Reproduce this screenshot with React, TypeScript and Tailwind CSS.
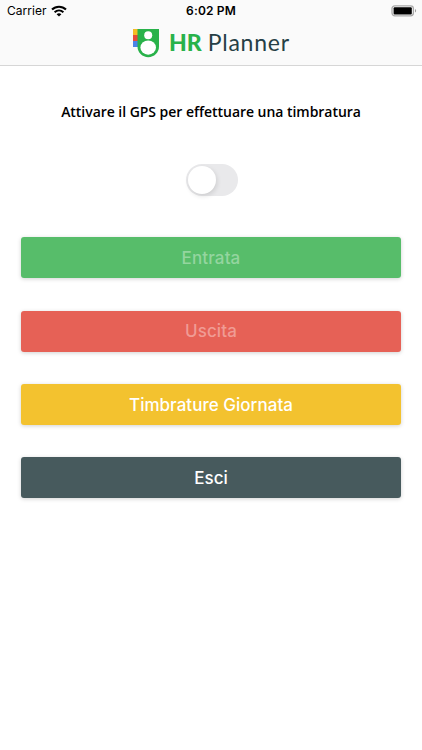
import clsx from "clsx";

const actions = [
  { label: "Entrata", color: "bg-[#57bd6a]", text: "text-[#94d59f]", spacing: "tracking-[0.12px]" },
  { label: "Uscita", color: "bg-[#e66156]", text: "text-[#f09b94]", spacing: "tracking-[0.1px]" },
  { label: "Timbrature Giornata", color: "bg-[#f3c22f]", text: "text-white", spacing: "tracking-[0.03px]" },
  { label: "Esci", color: "bg-[#475a5d]", text: "text-white", spacing: "tracking-normal" },
];

const WifiIcon = () => (
  <svg width="16" height="12" viewBox="0 0 16 12" fill="none">
    <path d="M1 4.6C5 .7 11 .7 15 4.6" stroke="black" strokeWidth="2.1" />
    <path d="M3.6 7.2c2.6-2.4 6.2-2.4 8.8 0" stroke="black" strokeWidth="2" />
    <path d="M5.6 9.2c1.4-1.3 3.4-1.3 4.8 0L8 11.6z" fill="black" />
  </svg>
);

const BatteryIcon = () => (
  <svg width="26" height="12" viewBox="0 0 26 12" fill="none">
    <rect x="1" y="0.8" width="21.4" height="10" rx="2.8" stroke="#a9a9a9" strokeWidth="1.3" />
    <rect x="2.6" y="2.2" width="18.2" height="7.2" rx="1" fill="black" />
    <path d="M24 4v3.6c1.5-.6 1.5-3 0-3.6z" fill="#9d9d9d" />
  </svg>
);

const LogoMark = () => (
  <svg width="26" height="29" viewBox="0 0 26 29">
    <path d="M0 0h6v6H0z" fill="#f5bd25" />
    <path d="M0 6h6v6H0z" fill="#e64b3c" />
    <path d="M0 12h6v6H0z" fill="#4b83e8" />
    <path d="M4.5 0H26v17.5a10.75 10.75 0 0 1-21.5 0z" fill="#29b24a" />
    <circle cx="15.2" cy="6.2" r="4" fill="white" />
    <ellipse cx="15.2" cy="18.6" rx="7.8" ry="7.1" fill="white" />
  </svg>
);

const StatusBar = () => (
  <div className="flex h-[22px] items-center justify-between pl-[7px] pr-[5px] font-[Inter,sans-serif] text-[12px] text-black">
    <div className="flex w-[110px] items-center gap-[5px]">
      <span className="tracking-[0.02px]">Carrier</span>
      <WifiIcon />
    </div>
    <span className="font-semibold tracking-[0.15px]">6:02 PM</span>
    <div className="flex w-[112px] justify-end">
      <BatteryIcon />
    </div>
  </div>
);

const Header = () => (
  <header className="h-[66px] border-b border-[#d6d6d6] bg-[#fafafa]">
    <StatusBar />
    <div className="flex items-start pl-[133px] pt-[7px]">
      <LogoMark />
      <div className="-mt-px ml-[10px] flex whitespace-pre font-[Lato,sans-serif] text-[23px] leading-[29px]">
        <span className="font-black text-[#29b24a]">HR</span>
        <span className="ml-[6px] tracking-[0.75px] text-[#263f46]">Planner</span>
      </div>
    </div>
  </header>
);

export default function App() {
  return (
    <div className="h-[750px] w-full overflow-hidden bg-white">
      <Header />
      <main className="flex flex-col items-center px-[21px]">
        <p className="mt-9 whitespace-nowrap font-['Open_Sans',sans-serif] text-[14px] font-semibold leading-5 tracking-[-0.04px] text-black">
          Attivare il GPS per effettuare una timbratura
        </p>
        <button
          role="switch"
          aria-checked="false"
          className="ml-[2px] mt-[42px] flex h-8 w-[52px] items-center rounded-full bg-[#e9e9eb] px-[2px]"
        >
          <span className="size-7 rounded-full bg-white shadow-[1px_2px_5px_rgba(0,0,0,0.12)]" />
        </button>
        <div className="mt-[41.4px] flex w-full flex-col gap-[32.3px]">
          {actions.map(({ label, color, text, spacing }) => (
            <button
              key={label}
              className={clsx(
                "h-[41px] w-full rounded-[3px] pt-[2px] font-[Inter,sans-serif] text-[17px] font-medium shadow-[0_1px_4px_rgba(0,0,0,0.18)]",
                color,
                text,
                spacing
              )}
            >
              {label}
            </button>
          ))}
        </div>
      </main>
    </div>
  );
}
